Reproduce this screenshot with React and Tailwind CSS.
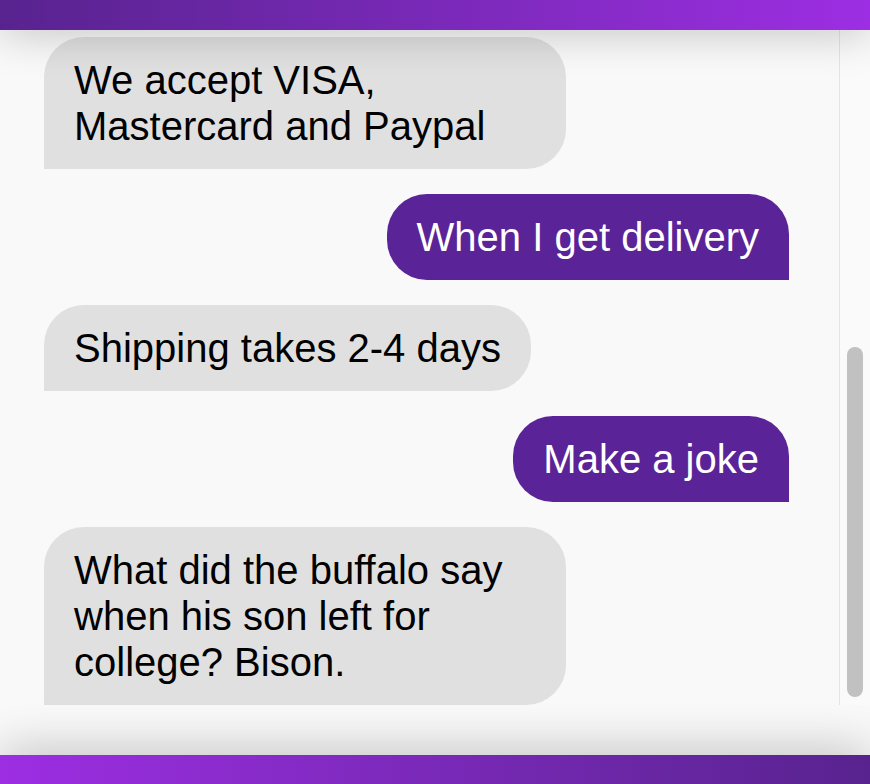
const messages = [
  { id: 1, from: "bot", text: "We accept VISA, Mastercard and Paypal" },
  { id: 2, from: "me", text: "When I get delivery" },
  { id: 3, from: "bot", text: "Shipping takes 2-4 days" },
  { id: 4, from: "me", text: "Make a joke" },
  { id: 5, from: "bot", text: "What did the buffalo say when his son left for college? Bison." },
];

function Bubble({ from, text }) {
  if (from === "me") {
    return (
      <div className="flex justify-end">
        <div className="max-w-[70%] rounded-[40px] rounded-br-none bg-[#5a2397] px-[30px] py-[20px] text-white">
          {text}
        </div>
      </div>
    );
  }
  return (
    <div className="flex justify-start">
      <div className="max-w-[70%] rounded-[40px] rounded-bl-none bg-[#e0e0e0] px-[30px] py-[20px] text-black">
        {text}
      </div>
    </div>
  );
}

export default function App() {
  return (
    <div
      className="flex h-[784px] w-[870px] flex-col overflow-hidden bg-[#f9f9f9]"
      style={{ fontFamily: '"Liberation Sans", Arial, sans-serif' }}
    >
      <div className="relative z-10 h-[30px] shrink-0 bg-gradient-to-r from-[#58238f] to-[#9d2ee3] shadow-[0_0_45px_rgba(0,0,0,0.28)]" />

      <div className="flex h-[675px] shrink-0">
        <div className="flex flex-1 flex-col gap-[25px] overflow-hidden pl-[44px] pr-[50px] pt-[7px] text-[40px] leading-[46px]">
          {messages.map(m => (
            <Bubble key={m.id} from={m.from} text={m.text} />
          ))}
        </div>
        <div className="w-[31px] shrink-0 border-l border-[#e4e4e4] bg-[#fafafa] pl-[7px] pt-[317px]">
          <div className="h-[350px] w-[16px] rounded-full bg-[#c1c1c1]" />
        </div>
      </div>

      <div className="h-[50px] shrink-0" />

      <div className="relative z-10 h-[29px] shrink-0 bg-gradient-to-l from-[#58238f] to-[#9d2ee3] shadow-[0_0_50px_rgba(0,0,0,0.32)]" />
    </div>
  );
}
